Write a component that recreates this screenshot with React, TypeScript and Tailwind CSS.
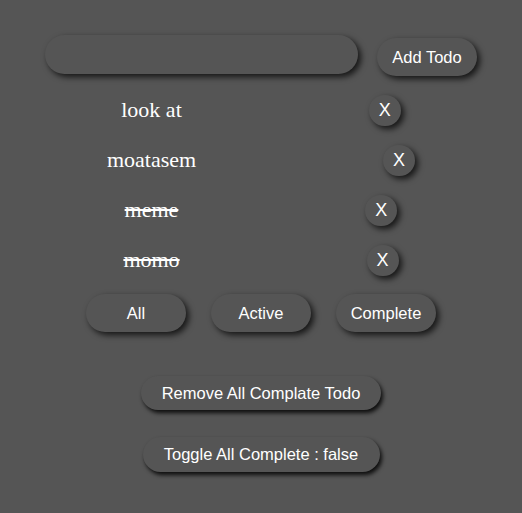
import React from "react";

const sh = "shadow-[3px_3px_6px_rgba(0,0,0,0.75)]";

function Row({ text, done }: { text: string; done?: boolean }) {
  return (
    <div className="flex h-[50px] items-center justify-center">
      <span
        className={`text-[22px] leading-none text-white ${done ? "line-through" : ""}`}
        style={{ fontFamily: '"Liberation Serif", "Times New Roman", serif' }}
      >
        {text}
      </span>
      <button
        className={`ml-[187px] flex h-[31px] w-[32px] items-center justify-center rounded-full bg-[#555555] text-[18px] text-white ${sh}`}
      >
        X
      </button>
    </div>
  );
}

export default function App() {
  return (
    <div
      className="min-h-[513px] w-full bg-[#555555] pt-[35px]"
      style={{ fontFamily: '"Liberation Sans", Arial, sans-serif' }}
    >
      <div className="flex items-start justify-center gap-[19px]">
        <input
          className={`h-[39px] w-[313px] rounded-full bg-[#555555] px-4 text-white outline-none ${sh}`}
        />
        <button
          className={`mt-[3px] h-[38px] w-[100px] rounded-full bg-[#555555] text-[16.5px] text-white ${sh}`}
        >
          Add Todo
        </button>
      </div>
      <div className="mt-[9px] flex flex-col">
        <Row text="look at" />
        <Row text="moatasem" />
        <Row text="meme" done />
        <Row text="momo" done />
      </div>
      <div className="mt-[9px] flex justify-center gap-[25px]">
        {["All", "Active", "Complete"].map((t) => (
          <button
            key={t}
            className={`h-[38px] w-[100px] rounded-full bg-[#555555] text-[16.5px] text-white ${sh}`}
          >
            {t}
          </button>
        ))}
      </div>
      <div className="mt-[44px] flex justify-center">
        <button
          className="h-[34px] w-[240px] rounded-full bg-[#555555] text-[16.5px] text-white shadow-[2px_3px_4px_rgba(0,0,0,0.85)]"
        >
          Remove All Complate Todo
        </button>
      </div>
      <div className="mt-[27px] flex justify-center">
        <button
          className="h-[35px] w-[237px] rounded-full bg-[#555555] text-[16.5px] text-white shadow-[2px_3px_4px_rgba(0,0,0,0.85)]"
        >
          Toggle All Complete : false
        </button>
      </div>
    </div>
  );
}
